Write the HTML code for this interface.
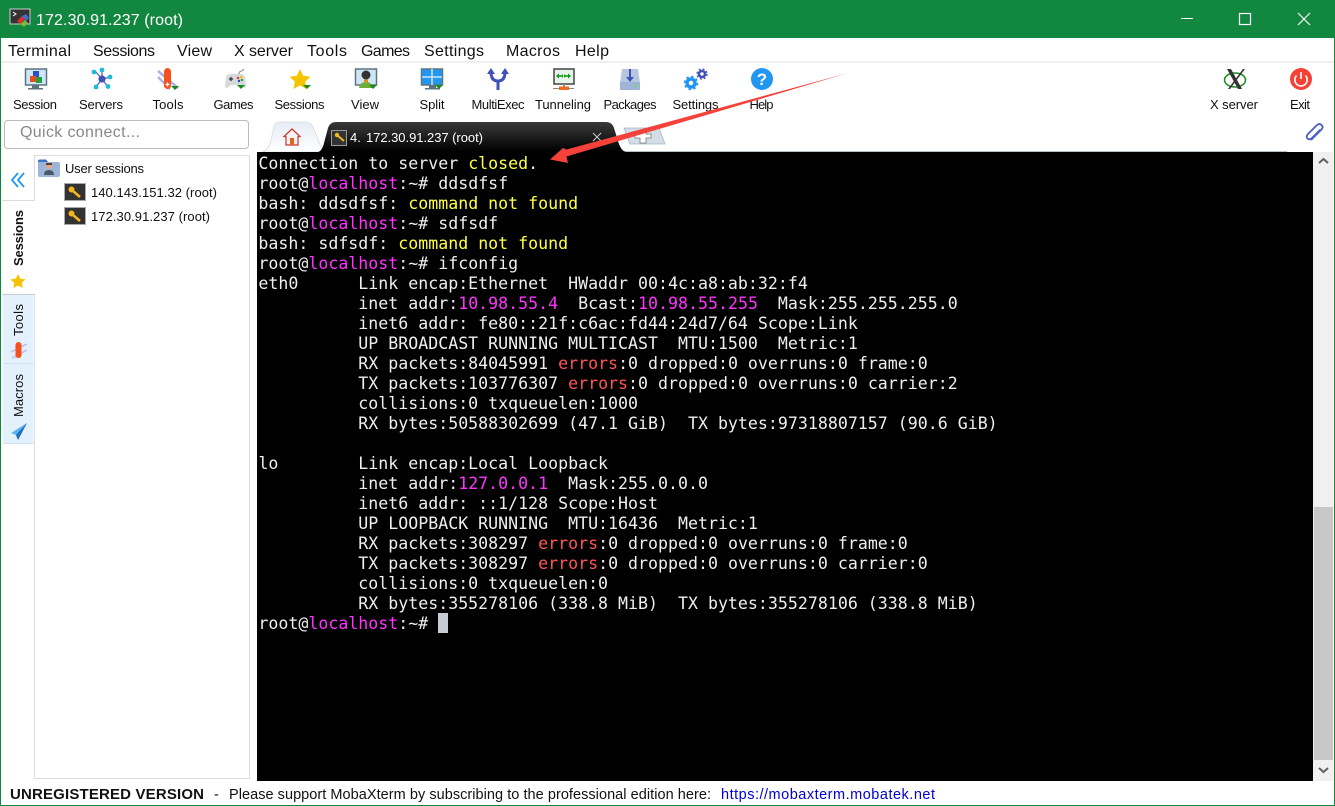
<!DOCTYPE html>
<html><head><meta charset="utf-8"><style>
html,body{margin:0;padding:0;width:1335px;height:806px;overflow:hidden;background:#fff}
#c{position:absolute;left:0;top:0}
#t{position:absolute;left:258.4px;top:154px;margin:0;font:16.6px/20px "DejaVu Sans Mono","Liberation Mono",monospace;color:#eee;white-space:pre}
#t i{font-style:normal}.m{color:#ff33ff}.y{color:#ffff44}.r{color:#f55}
text{font-family:"Liberation Sans",sans-serif;fill:#111}
.b{font-size:13px;text-anchor:middle}
.n{font-size:16px}
</style></head><body>
<svg id="c" width="1335" height="806" viewBox="0 0 1335 806">
<defs>
<linearGradient id="tg" x1="0" y1="0" x2="0" y2="1"><stop offset="0" stop-color="#3a3a3a"/><stop offset="1" stop-color="#000"/></linearGradient>
<linearGradient id="hg" x1="0" y1="0" x2="0" y2="1"><stop offset="0" stop-color="#e6edf4"/><stop offset="1" stop-color="#fff"/></linearGradient>
<g id="dn"><path d="M0 0h8l-4 4z" fill="#1a8a1a"/></g>
<g id="key"><rect x=".5" y=".5" width="21" height="17" fill="#333" stroke="#aaa"/><circle cx="7.5" cy="6.5" r="3" fill="#f3b61f"/><path d="M9 8l7 6" stroke="#f3b61f" stroke-width="2.6"/></g>
</defs>
<rect width="1335" height="806" fill="#fff"/>
<rect width="1335" height="38" fill="#12873f"/>
<rect x="0" y="0" width="1" height="806" fill="#12873f"/>
<rect x="1334" y="0" width="1" height="806" fill="#12873f"/>
<rect x="0" y="805" width="1335" height="1" fill="#12873f"/>
<!-- title icon -->
<rect x="10" y="9" width="20" height="15" fill="#333" stroke="#ccc"/>
<path d="M13 12l3 2-3 2" stroke="#fff" fill="none"/>
<path d="M17 21l5-5 3 3-5 5z" fill="#d9342b"/><path d="M22 16l4-2 3 4-3 3z" fill="#3b70d0"/><path d="M20 24l5-4 3 3-4 4z" fill="#7ab93a"/>
<text x="36" y="25" font-size="16" textLength="147" style="fill:#fff">172.30.91.237 (root)</text>
<!-- window buttons -->
<rect x="1181" y="18" width="12" height="1" fill="#fff"/>
<rect x="1239.5" y="13.5" width="11" height="11" fill="none" stroke="#fff" stroke-width="1.2"/>
<path d="M1298 13l12 12M1310 13l-12 12" stroke="#fff" stroke-width="1.2"/>
<!-- menu -->
<text class="n" x="8" y="56" textLength="63">Terminal</text>
<text class="n" x="93" y="56" textLength="62">Sessions</text>
<text class="n" x="177" y="56" textLength="35">View</text>
<text class="n" x="234" y="56" textLength="59">X server</text>
<text class="n" x="307" y="56" textLength="40">Tools</text>
<text class="n" x="361" y="56" textLength="49">Games</text>
<text class="n" x="424" y="56" textLength="60">Settings</text>
<text class="n" x="506" y="56" textLength="54">Macros</text>
<text class="n" x="575" y="56" textLength="34">Help</text>
<rect x="1" y="61" width="1333" height="2" fill="#efefef"/>
<!-- toolbar icons -->
<!-- Session -->
<rect x="25.5" y="69" width="21" height="16" fill="#cfe6f7" stroke="#5d7480" stroke-width="1.5"/>
<rect x="32" y="85" width="7" height="3" fill="#5d7480"/><rect x="28" y="88" width="15" height="1.5" fill="#5d7480"/>
<rect x="33" y="71" width="6" height="6" fill="#2a52c8"/><rect x="30" y="76" width="6" height="6" fill="#e5501c"/><rect x="36" y="77" width="6" height="6" fill="#22a03a"/>
<!-- Servers -->
<path d="M102 79L95 71M102 79L102 69M102 79L111 77M102 79L108 87M102 79L96 87" stroke="#4a5fbf" stroke-width="1.2"/>
<circle cx="102" cy="79" r="3.6" fill="#3f51b5"/>
<g fill="#22b8d8"><circle cx="94" cy="72" r="2.4"/><circle cx="102" cy="70" r="2.4"/><circle cx="110" cy="77" r="2.4"/><circle cx="108" cy="86.500" r="2.4"/><circle cx="96" cy="87" r="2.4"/></g>
<!-- Tools -->
<path d="M158 71l20 17M158 77l12 12" stroke="#a9b3e6" stroke-width="2.500"/>
<rect x="164" y="68" width="7" height="21" rx="3.500" fill="#f4511e"/><path d="M165.500 84.500h4M167.500 82.500v4" stroke="#fff" stroke-width="1.300"/>
<use href="#dn" x="171" y="86"/>
<!-- Games -->
<path d="M226 78q0-4 4-4h10q5 0 5 4l1 7q0 3-2 3l-4-3h-9l-4 3q-2 0-2-3z" fill="#d6dadc"/>
<path d="M239 74q0-3 3-3l2-2" stroke="#888" fill="none"/>
<path d="M229 79h4M231 77v4" stroke="#444" stroke-width="1.500"/>
<circle cx="238" cy="78" r="1.200" fill="#e33"/><circle cx="241" cy="77" r="1.200" fill="#fb0"/><circle cx="239" cy="81" r="1.200" fill="#24c"/><circle cx="242" cy="80" r="1.200" fill="#2a2"/>
<use href="#dn" x="237" y="85"/>
<!-- Sessions star -->
<path d="M300 69l3.200 6.800 7.300.9-5.400 5 1.400 7.300-6.500-3.600-6.500 3.600 1.400-7.300-5.400-5 7.300-.9z" fill="#f5c400"/>
<use href="#dn" x="303" y="85"/>
<!-- View -->
<rect x="355.500" y="69" width="21" height="16" fill="#cfe6f7" stroke="#5d7480" stroke-width="1.500"/>
<circle cx="366" cy="75" r="4.500" fill="#333"/><path d="M359 88q1-6 7-6t7 6z" fill="#6fae3a"/><rect x="364" y="79.500" width="4" height="2.500" fill="#e88a1a"/>
<use href="#dn" x="369" y="85"/>
<!-- Split -->
<rect x="421.500" y="69" width="21" height="16" fill="#2196f3" stroke="#5d7480" stroke-width="1.500"/>
<path d="M422 77h20M432 69v16" stroke="#cfe6f7" stroke-width="1.500"/>
<rect x="429" y="85" width="7" height="3" fill="#5d7480"/><rect x="425" y="88" width="15" height="1.500" fill="#5d7480"/>
<use href="#dn" x="435" y="85"/>
<!-- MultiExec -->
<path d="M498 90V81M498 81q-7 0-7-9M498 81q7 0 7-9" fill="none" stroke="#3f51b5" stroke-width="3"/>
<path d="M487 74l4-6 4 6zM501 74l4-6 4 6z" fill="#3f51b5"/>
<!-- Tunneling -->
<rect x="554" y="69" width="20" height="15" fill="#e8f4ea" stroke="#444" stroke-width="1.500"/>
<path d="M558 76h5M569 76h-5" stroke="#0a9a0a" stroke-width="1.500"/><path d="M556 76l3-2.500v5zM571 76l-3-2.500v5zM561 76l2-2v4zM566 76l-2-2v4z" fill="#0a9a0a"/>
<rect x="553" y="88" width="21" height="1" fill="#888"/><rect x="559" y="86.500" width="10" height="3.500" fill="#f26a1b"/><rect x="563" y="84" width="2" height="3" fill="#888"/>
<!-- Packages -->
<path d="M622 69h16l2 14v6q0 1-1 1h-18q-1 0-1-1v-6z" fill="#b5c6de"/><path d="M620 82h20v7q0 1-1 1h-18q-1 0-1-1z" fill="#9fb5d8"/>
<path d="M630 69v10" stroke="#3f51b5" stroke-width="2"/><path d="M626 77h8l-4 5z" fill="#3f51b5"/><rect x="635" y="85" width="2" height="2" fill="#6fe04a"/>
<!-- Settings -->
<circle cx="691" cy="83" r="4" fill="none" stroke="#2196f3" stroke-width="3.500"/>
<circle cx="691" cy="83" r="6.500" fill="none" stroke="#2196f3" stroke-width="1.500" stroke-dasharray="2.500 2.600"/>
<circle cx="702" cy="74" r="3" fill="none" stroke="#3f51b5" stroke-width="2.600"/>
<circle cx="702" cy="74" r="5" fill="none" stroke="#3f51b5" stroke-width="1.300" stroke-dasharray="2 2"/>
<!-- Help -->
<circle cx="762" cy="79" r="11" fill="#2196f3"/>
<text x="762" y="85" font-size="17" font-weight="bold" text-anchor="middle" style="fill:#fff">?</text>
<!-- X server -->
<ellipse cx="1235" cy="80" rx="10.500" ry="7" fill="none" stroke="#1a8a1a" stroke-width="1.500"/>
<path d="M1227 69l11 20h4l-11-20zM1243 69l-15 20h2l15-20z" fill="#333"/>
<!-- Exit -->
<circle cx="1301" cy="79" r="11" fill="#f44336"/>
<path d="M1296.500 75.500a6.200 6.200 0 1 0 9 0" fill="none" stroke="#fff" stroke-width="1.600"/><path d="M1301 72v7" stroke="#fff" stroke-width="1.600"/>
<!-- toolbar labels -->
<text class="b" x="35" y="109" textLength="44">Session</text>
<text class="b" x="101" y="109" textLength="44">Servers</text>
<text class="b" x="168" y="109" textLength="31">Tools</text>
<text class="b" x="233.500" y="109" textLength="40">Games</text>
<text class="b" x="299.500" y="109" textLength="50">Sessions</text>
<text class="b" x="365" y="109" textLength="28">View</text>
<text class="b" x="432" y="109" textLength="25">Split</text>
<text class="b" x="498" y="109" textLength="53">MultiExec</text>
<text class="b" x="563" y="109" textLength="56">Tunneling</text>
<text class="b" x="630" y="109" textLength="53">Packages</text>
<text class="b" x="695.500" y="109" textLength="46">Settings</text>
<text class="b" x="761.500" y="109" textLength="24">Help</text>
<text class="b" x="1234" y="109" textLength="48">X server</text>
<text class="b" x="1300" y="109" textLength="20">Exit</text>
<!-- Quick connect -->
<rect x="4.500" y="120.500" width="244" height="28" rx="3" fill="#fff" stroke="#bbb"/>
<text x="20" y="137" font-size="16" textLength="120" style="fill:#888">Quick connect...</text>
<!-- tabs -->
<rect x="622" y="151" width="665" height="1" fill="#b6bec6"/>
<path d="M262 152q7-2 9-12l3-13q1-5 6-5h25q6 0 8 5l5 12q3 11 9 13z" fill="url(#hg)" stroke="#d5dde5" stroke-width=".8"/>
<path d="M292 129l-8 7.500h2v8.500h12v-8.500h2z" fill="#f4f4f4" stroke="#c33" stroke-width="1.200"/><rect x="290" y="138" width="4" height="7" fill="#e8641c"/>
<path d="M318 152q4-1 6-9l4-15q2-6 8-6h270q6 0 8 6l4 13q3 10 8 11z" fill="url(#tg)"/>
<rect x="331.500" y="130.500" width="15" height="15" fill="#333" stroke="#999"/>
<circle cx="337" cy="135" r="2.200" fill="#f3b61f"/><path d="M338 136l6 5" stroke="#f3b61f" stroke-width="2"/>
<text x="350" y="142" font-size="13" style="fill:#fff">4.</text>
<text x="366" y="142" font-size="13" textLength="117" style="fill:#fff">172.30.91.237 (root)</text>
<path d="M593 133l8 8M601 133l-8 8" stroke="#ccc" stroke-width="1"/>
<path d="M624 128h35l6 16h-35z" fill="#d3dde8" stroke="#aab4c0" stroke-width=".8"/>
<path d="M640 131h6v3h5v4h-5v5h-6v-5h-5v-4h5z" fill="#fff" stroke="#777" stroke-width=".8"/>
<!-- paperclip -->
<path d="M1311 140l10-10q3-3 .5-5t-5 .5l-8 8q-3 3-1 5t5-1l8-8" fill="none" stroke="#4a5fc1" stroke-width="1.800"/>
<!-- terminal bg & scrollbar -->
<rect x="257" y="152" width="1056" height="629" fill="#000"/>
<rect x="1313" y="152" width="20" height="629" fill="#f0f0f0"/>
<rect x="1314" y="507" width="19" height="253" fill="#c8c8c8"/>
<path d="M1319 163l4.500-4 4.500 4" fill="none" stroke="#606060" stroke-width="2"/>
<path d="M1319 768l4.500 4 4.500-4" fill="none" stroke="#606060" stroke-width="2"/>
<rect x="438" y="613" width="10" height="20" fill="#c6ccd2"/>
<!-- left side -->
<rect x="34.500" y="155.500" width="215" height="623" fill="#fff" stroke="#ddd"/>
<path d="M18 173l-6 7 6 7M24 173l-6 7 6 7" fill="none" stroke="#2196f3" stroke-width="1.800"/>
<rect x="2" y="200" width="33" height="1" fill="#ddd"/>
<rect x="2" y="201" width="33" height="94" fill="#fff"/><rect x="34" y="156" width="1" height="45" fill="#ddd"/>
<rect x="3" y="295" width="30.500" height="68" fill="#e3f1fd"/><rect x="2" y="294" width="33" height="1" fill="#ccc"/>
<rect x="3" y="364" width="30.500" height="79" fill="#e3f1fd"/><rect x="3" y="363" width="30.500" height="1" fill="#cfe2f3"/>
<rect x="3" y="443" width="30.500" height="1" fill="#cfe2f3"/>
<text transform="translate(23 266) rotate(-90)" font-size="13" font-weight="bold" textLength="56">Sessions</text>
<path d="M18 274l2.300 4.800 5.200.6-3.800 3.500 1 5.100-4.700-2.500-4.700 2.500 1-5.100-3.800-3.500 5.200-.6z" fill="#f5c400"/>
<text transform="translate(23 336) rotate(-90)" font-size="13" textLength="32">Tools</text>
<path d="M11 352l16-8M12 358l15-8" stroke="#bcc4ea" stroke-width="1.800"/><rect x="15.500" y="342" width="6" height="16" rx="3" fill="#f4511e"/>
<text transform="translate(23 417) rotate(-90)" font-size="13" textLength="43">Macros</text>
<path d="M27 423l-16 10 5 2 2 5z" fill="#5fb2ee"/><path d="M27 423l-11 12 2 5z" fill="#1f6fc0"/>
<!-- tree -->
<path d="M38 162q0-2 2-2h6l2 2h10q2 0 2 2v11q0 2-2 2H40q-2 0-2-2z" fill="#9db5d8"/><path d="M38 161q0-1.500 2-1.500h6l2 2.500H38z" fill="#3f71c0"/>
<circle cx="49" cy="166" r="2.800" fill="#e8a87c"/><path d="M44 175q0-5 5-5t5 5z" fill="#455a64"/><path d="M46 163h6v2h-6z" fill="#5a4030"/>
<text x="65" y="173" font-size="13" textLength="79">User sessions</text>
<use href="#key" x="64" y="183"/><text x="91" y="197" font-size="13" textLength="126">140.143.151.32 (root)</text>
<use href="#key" x="64" y="207"/><text x="91" y="221" font-size="13" textLength="119">172.30.91.237 (root)</text>
<!-- status -->
<text x="10" y="799" font-size="15" font-weight="bold" textLength="194">UNREGISTERED VERSION</text>
<text x="214" y="799" font-size="14.500">-</text>
<text x="229" y="799" font-size="14.500" textLength="482">Please support MobaXterm by subscribing to the professional edition here:</text>
<text x="721" y="799" font-size="14.500" textLength="214" style="fill:#0000d8">https://mobaxterm.mobatek.net</text>
</svg>
<pre id="t">Connection to server <i class="y">closed</i>.
root@<i class="m">localhost</i>:~# ddsdfsf
bash: ddsdfsf: <i class="y">command not found</i>
root@<i class="m">localhost</i>:~# sdfsdf
bash: sdfsdf: <i class="y">command not found</i>
root@<i class="m">localhost</i>:~# ifconfig
eth0      Link encap:Ethernet  HWaddr 00:4c:a8:ab:32:f4
          inet addr:<i class="m">10.98.55.4</i>  Bcast:<i class="m">10.98.55.255</i>  Mask:255.255.255.0
          inet6 addr: fe80::21f:c6ac:fd44:24d7/64 Scope:Link
          UP BROADCAST RUNNING MULTICAST  MTU:1500  Metric:1
          RX packets:84045991 <i class="r">errors</i>:0 dropped:0 overruns:0 frame:0
          TX packets:103776307 <i class="r">errors</i>:0 dropped:0 overruns:0 carrier:2
          collisions:0 txqueuelen:1000
          RX bytes:50588302699 (47.1 GiB)  TX bytes:97318807157 (90.6 GiB)

lo        Link encap:Local Loopback
          inet addr:<i class="m">127.0.0.1</i>  Mask:255.0.0.0
          inet6 addr: ::1/128 Scope:Host
          UP LOOPBACK RUNNING  MTU:16436  Metric:1
          RX packets:308297 <i class="r">errors</i>:0 dropped:0 overruns:0 frame:0
          TX packets:308297 <i class="r">errors</i>:0 dropped:0 overruns:0 carrier:0
          collisions:0 txqueuelen:0
          RX bytes:355278106 (338.8 MiB)  TX bytes:355278106 (338.8 MiB)
root@<i class="m">localhost</i>:~#</pre>
<svg width="1335" height="806" style="position:absolute;left:0;top:0;pointer-events:none"><path d="M848 73L566.500 149.500 563 148 550 159.500 568 163 566.500 156.500z" fill="#f4413a"/></svg>
</body></html>
